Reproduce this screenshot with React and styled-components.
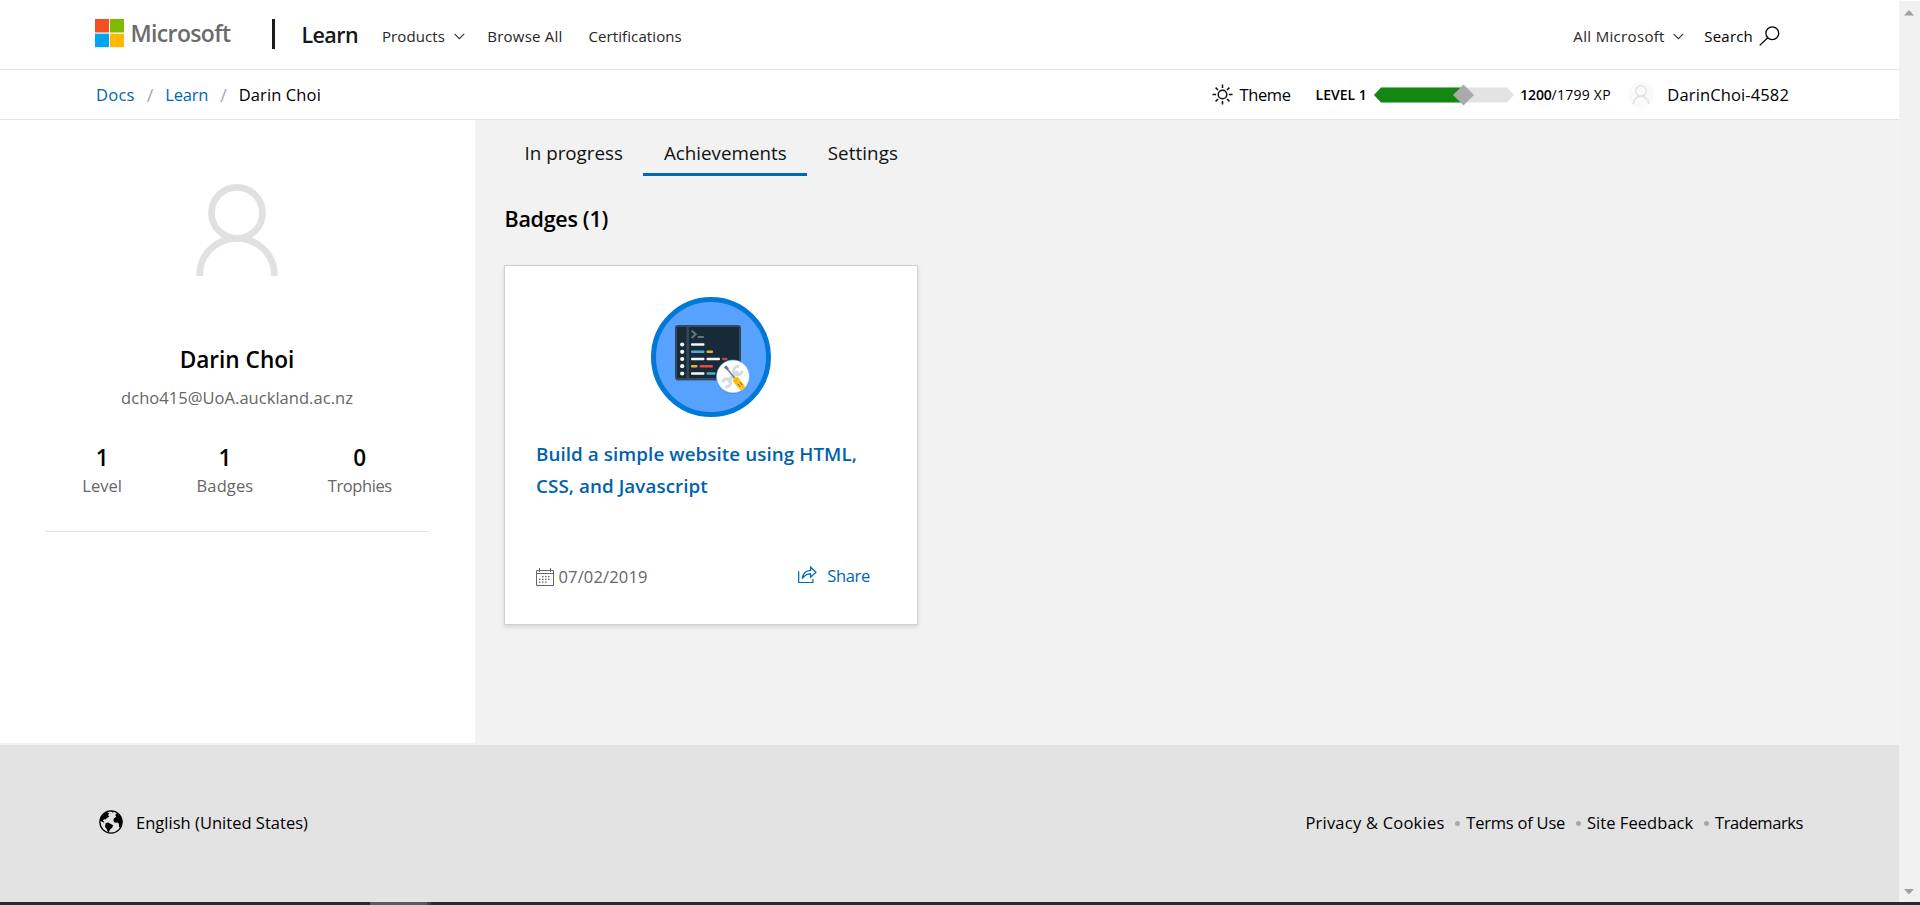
import React from 'react';
import styled, { createGlobalStyle } from 'styled-components';

const GlobalStyle = createGlobalStyle`
  * { box-sizing: border-box; }
  body {
    margin: 0;
    background: #fff;
    color: #000;
    font-family: "Open Sans", "Noto Sans", sans-serif;
    font-size: 16.5px;
    overflow: hidden;
  }
  svg { display: block; flex: none; }
`;

const Screen = styled.div`
  width: 100%;
  height: 905px;
  display: flex;
  flex-direction: column;
`;

const Viewport = styled.div`
  height: 902px;
  display: flex;
`;

const Page = styled.div`
  flex: 1;
  min-width: 0;
  display: flex;
  flex-direction: column;
`;

const ScrollTrack = styled.div`
  width: 21px;
  margin-top: 1px;
  padding: 9px 0 7px 5px;
  background: #f1f1f1;
  display: flex;
  flex-direction: column;
  justify-content: space-between;
`;

const Taskbar = styled.div`
  height: 3px;
  background: #29292e;
  display: flex;
`;

const TaskbarItem = styled.div`
  width: 61px;
  margin-left: 370px;
  background: #5a5a5e;
  border-right: 4px solid #414146;
`;

/* Site header */

const Header = styled.header`
  height: 70px;
  flex: none;
  padding: 19px 119px 0 95px;
  border-bottom: 1px solid #e3e3e3;
  display: flex;
  align-items: flex-start;
`;

const Brand = styled.a`
  width: 177px;
  height: 29px;
  display: flex;
  align-items: flex-start;
  color: #6b6b6b;
  font-size: 23px;
  font-weight: 600;
  letter-spacing: -0.64px;
  line-height: 28px;
`;

const BrandName = styled.span`
  margin-left: 6.5px;
`;

const BrandDivider = styled.div`
  width: 2.5px;
  height: 30px;
  background: #1b1b1b;
`;

const SiteName = styled.a`
  margin-left: 27px;
  width: 80.5px;
  color: #171717;
  font-size: 21.5px;
  font-weight: 600;
  letter-spacing: -0.6px;
  line-height: 31px;
`;

const NavGroup = styled.nav`
  display: flex;
  align-items: center;
  height: 20px;
  margin-top: 7px;
  margin-left: ${(p) => (p.$end ? 'auto' : '0')};
`;

const NavLink = styled.a`
  display: flex;
  align-items: center;
  font-size: 15px;
  line-height: 20px;
  white-space: nowrap;
  color: ${(p) => (p.$dark ? '#000' : '#262626')};
  letter-spacing: ${(p) => p.$track || 0}px;
  margin-left: ${(p) => p.$gap || 0}px;
  svg { margin-left: ${(p) => p.$iconGap || 9}px; }
`;

/* Breadcrumb bar */

const SubHeader = styled.div`
  height: 50px;
  flex: none;
  padding: 0 110px 0 96px;
  border-bottom: 1px solid #e3e3e3;
  display: flex;
  align-items: center;
  justify-content: space-between;
  white-space: nowrap;
`;

const Crumbs = styled.div`
  display: flex;
  align-items: center;
  line-height: 24px;
`;

const Crumb = styled.a`
  color: ${(p) => (p.$current ? '#000' : '#0065b3')};
  letter-spacing: ${(p) => p.$track}px;
`;

const Slash = styled.span`
  margin: 0 11.5px 0 12px;
  width: 7px;
  font-size: 18px;
  color: #a8a8a8;
`;

const Account = styled.div`
  display: flex;
  align-items: center;
  line-height: 24px;
`;

const ThemeButton = styled.a`
  display: flex;
  align-items: center;
  gap: 6.5px;
  letter-spacing: -0.37px;
`;

const Level = styled.span`
  margin-left: 25px;
  font-size: 14px;
  font-weight: 600;
`;

const LevelBar = styled.div`
  margin: 0 6px 0 7.5px;
`;

const Points = styled.span`
  font-size: 14px;
  letter-spacing: 0.25px;
  b { font-weight: 600; letter-spacing: -0.2px; }
`;

const Avatar = styled.div`
  width: 26px;
  height: 26px;
  margin: 0 13px 0 17.5px;
  border-radius: 50%;
  background: #fafafa;
  display: flex;
  justify-content: center;
  align-items: center;
`;

const UserName = styled.span`
  letter-spacing: 0.13px;
`;

/* Body */

const Body = styled.div`
  height: 625px;
  flex: none;
  background: #f2f2f2;
  display: flex;
  align-items: flex-start;
`;

const Sidebar = styled.aside`
  width: 475px;
  height: 623px;
  padding: 64px 46px 0 45px;
  background: #fff;
  display: flex;
  flex-direction: column;
  align-items: center;
`;

const ProfileName = styled.h1`
  margin: 69px 0 0;
  font-size: 22.6px;
  font-weight: 600;
  line-height: 30px;
`;

const Email = styled.div`
  margin-top: 11px;
  line-height: 24px;
  letter-spacing: 0.04px;
  color: #666;
`;

const Stats = styled.div`
  align-self: stretch;
  margin-top: 34px;
  height: 88px;
  border-bottom: 1px solid #e3e3e3;
  display: flex;
  justify-content: space-around;
`;

const Stat = styled.div`
  display: flex;
  flex-direction: column;
  align-items: center;
  gap: 2px;
`;

const StatValue = styled.span`
  font-size: 22.5px;
  font-weight: 600;
  line-height: 28px;
`;

const StatLabel = styled.span`
  line-height: 24px;
  color: #666;
  letter-spacing: ${(p) => p.$track}px;
`;

const Main = styled.main`
  padding-left: 29px;
`;

const Tabs = styled.div`
  display: flex;
`;

const Tab = styled.a`
  height: 56px;
  padding: 21px 20.5px 0 20.5px;
  border-bottom: 3px solid ${(p) => (p.$active ? '#0067b8' : 'transparent')};
  font-size: 18.8px;
  line-height: 25px;
  letter-spacing: ${(p) => p.$track}px;
  color: #111;
`;

const SectionTitle = styled.h2`
  margin: 28px 0 31px 0.5px;
  font-size: 21.5px;
  font-weight: 600;
  line-height: 30px;
  letter-spacing: -0.29px;
`;

const Card = styled.article`
  width: 414px;
  height: 360px;
  padding: 31px 31px 0;
  background: #fff;
  border: 1px solid #d2d2d2;
  box-shadow: 0 2px 4px rgba(0, 0, 0, 0.12);
  display: flex;
  flex-direction: column;
  align-items: center;
`;

const CardTitle = styled.h3`
  align-self: stretch;
  margin: 21px 0 0;
  font-size: 18.8px;
  font-weight: 600;
  line-height: 32px;
  letter-spacing: 0.08px;
  color: #0062ad;
`;

const CardFooter = styled.div`
  align-self: stretch;
  margin-top: 62px;
  padding-right: 16px;
  display: flex;
  justify-content: space-between;
  line-height: 24px;
`;

const DateEarned = styled.span`
  display: flex;
  align-items: center;
  gap: 4.5px;
  margin-top: 1px;
  color: #666;
  letter-spacing: 0.15px;
`;

const ShareLink = styled.a`
  display: flex;
  gap: 10px;
  height: 24px;
  color: #0065b3;
  letter-spacing: -0.3px;
  svg { margin-top: 2px; }
`;

/* Footer */

const Footer = styled.footer`
  flex: 1;
  padding: 0 96px 1px 99px;
  background: #e3e3e3;
  display: flex;
  align-items: center;
  justify-content: space-between;
  line-height: 24px;
`;

const Locale = styled.a`
  display: flex;
  align-items: center;
  gap: 13px;
  letter-spacing: 0.02px;
  svg { margin-bottom: 3px; }
`;

const FooterLinks = styled.div`
  display: flex;
  align-items: center;
`;

const FooterLink = styled.a`
  letter-spacing: ${(p) => p.$track}px;
`;

const Dot = styled.span`
  width: 5px;
  height: 5px;
  margin: 0 6px 0 10.8px;
  border-radius: 50%;
  background: #a9a9a9;
`;

/* Drawings */

const WindowsLogo = () => (
  <svg width="29" height="29" viewBox="0 0 29 29">
    <path fill="#f25022" d="M0 0h14v13.5H0z" />
    <path fill="#7fba00" d="M15 0h14v13.5H15z" />
    <path fill="#00a4ef" d="M0 14.7h14V28.2H0z" />
    <path fill="#ffb900" d="M15 14.7h14V28.2H15z" />
  </svg>
);

const Chevron = () => (
  <svg width="11" height="7" viewBox="0 0 11 7" fill="none" stroke="#333" strokeWidth="1.1">
    <path d="M.6 .8 5.4 5.7 10.2 .8" />
  </svg>
);

const SearchIcon = () => (
  <svg width="21" height="20" viewBox="0 0 21 20" fill="none" stroke="#000" strokeWidth="1.3">
    <circle cx="13.3" cy="7.2" r="6.4" />
    <path d="M8.8 11.7.7 19.4" />
  </svg>
);

const SunIcon = () => (
  <svg width="21" height="21" viewBox="0 0 21 21" fill="none" stroke="#111" strokeWidth="1.5">
    <circle cx="10.5" cy="10.5" r="4.3" />
    <path d="M10.5 .5v3.6M10.5 16.9v3.6M.5 10.5h3.6M16.9 10.5h3.6M3.6 3.6l2.4 2.4M15 15l2.4 2.4M3.6 17.4 6 15M15 6l2.4-2.4" />
  </svg>
);

const Progress = () => (
  <svg width="140" height="22" viewBox="0 0 140 22">
    <path fill="#e3e3e3" d="M0 11 7 3.5h126l7 7.5-7 7.5H7z" />
    <path fill="#128712" d="M0 11 7 3.5h83v15H7z" />
    <path fill="#aaa" d="M79 11 89.5 .5 100 11 89.5 21.5z" />
  </svg>
);

const PersonIcon = ({ width, height }) => (
  <svg width={width} height={height} viewBox="0 0 82 92" fill="none" stroke="#e1e1e1" strokeWidth="6.7">
    <circle cx="41" cy="28.9" r="25.5" />
    <path d="M3.7 92v-1.5a37.3 36.2 0 0 1 74.6 0V92" />
  </svg>
);

const CalendarIcon = () => (
  <svg width="18" height="18" viewBox="0 0 18 18" fill="none" stroke="#666" strokeWidth="1">
    <path d="M.5 2.5h17v15H.5zM.5 5.5h17M3.5 0v4M14.5 0v4" />
    <path strokeWidth="1.2" strokeDasharray="1.5 1.5" d="M6 8.6h9M3 11.4h12M3 14.2h9" />
  </svg>
);

const ShareIcon = () => (
  <svg width="19" height="18" viewBox="0 0 19 18" fill="none" stroke="#0065b3" strokeWidth="1.2">
    <path d="M.7 5.2v11.3h14.2v-3.5" />
    <path d="M4.3 12.6c.6-4.8 3.6-8 8.3-8.2V1l5.4 5.2-5.4 5V7.9c-3.8 0-6.3 1.7-8.3 4.7z" />
  </svg>
);

const GlobeIcon = () => (
  <svg width="24" height="24" viewBox="0 0 24 24">
    <circle cx="12" cy="12" r="11.1" fill="none" stroke="#000" strokeWidth="1.3" />
    <path d="M1.2 10.5C1.8 6.3 4.2 3.2 7.6 1.8L10.2 3.6 9 5.2l1.3 1.4L8 7.9 6.2 9.7l-1-.6-1.4 1.3 1.7 1.8-1.3.2z" />
    <path d="M6.6 13.2l2.5-.7 2.3 1.2 2.7 1.5-.9 2.6-2.2 1.6-1 2.4-1 .9-1.3-3.8-1.7-2.2z" />
    <path d="M14.9 8.6l2.3-1.9-1-1.7 1.7-1.7C21 5 23 8 23.2 11.7c-.1 2.2-.6 4-1.7 5.8l-1.4-.6-.3-3.4-1.5-1-2.6.2-1.4-1.9z" />
    <path d="M11.5 1.2h3.2l-.8 1.5z" />
  </svg>
);

const codeRows = [
  [18.5, [[16, 13.5, '#f4f7f3']]],
  [25.8, [[16, 13.5, '#4ab0d4'], [31.5, 6.5, '#f0ad3e']]],
  [33, [[16, 13.5, '#f4f7f3'], [31.5, 13.5, '#f4f7f3'], [47, 5.5, '#c04a45']]],
  [40.2, [[16, 6.5, '#f0ad3e'], [24.5, 13.5, '#e8483c']]],
  [47.5, [[16, 13.5, '#f4f7f3'], [31.5, 9, '#4ab0d4']]],
];

const BadgeArt = () => (
  <svg width="120" height="120" viewBox="0 0 120 120">
    <circle cx="60" cy="60" r="57.5" fill="#58a2ff" stroke="#0078d7" strokeWidth="5" />
    <g transform="translate(24 28)">
      <rect x=".5" y="1.5" width="65.5" height="54.5" rx="2.5" fill="#3d6ea8" opacity=".7" />
      <rect x="1" y="1" width="64" height="53" rx="2" fill="#182a37" stroke="#34495a" strokeWidth="2" />
      <path d="M12.7 1v53" stroke="#34495a" strokeWidth="2.4" />
      <path d="M16.7 5.5l4 3.7-4 3.7M22.8 12h6" fill="none" stroke="#64757f" strokeWidth="2" />
      {codeRows.map(([y, runs]) => (
        <g key={y}>
          <circle cx="7.2" cy={y + 1} r="2.1" fill="#f4f7f3" />
          {runs.map(([x, w, fill]) => (
            <rect key={x} x={x} y={y - 0.2} width={w} height="2.4" rx="1" fill={fill} />
          ))}
        </g>
      ))}
    </g>
    <circle cx="82" cy="80.5" r="16.5" fill="#3a80dc" opacity=".6" />
    <circle cx="82" cy="79.5" r="16.5" fill="#fff" stroke="#58a2ff" strokeWidth=".6" />
    <g fill="none" stroke="#d7dadd">
      <path d="M76.5 84.5 87 74.5" strokeWidth="3.6" />
      <path d="M88.3 69.7a4.2 4.2 0 1 0 2.8 4.2" strokeWidth="3" />
      <path d="M71.7 85.4a4 4 0 1 1 2.8 4.2" strokeWidth="3" />
    </g>
    <path d="M75 70.5 84.5 82" stroke="#77879a" strokeWidth="1.8" />
    <path d="M74 69.2l3 3" stroke="#66788c" strokeWidth="3" />
    <path d="M85.3 83.4 90.5 89.7" stroke="#fcc419" strokeWidth="6.5" strokeLinecap="round" />
    <path d="M83.3 84.8l4.2-3.5" stroke="#f5b400" strokeWidth="2" />
    <path d="M86.8 86.8l2.5 3M89 85.3l2.3 2.8" stroke="#7a621c" strokeWidth="1" />
  </svg>
);

const Arrow = ({ down }) => (
  <svg width="10" height="6" viewBox="0 0 10 6">
    <path fill="#a0a0a0" d={down ? 'M0 0h10L5 5.5z' : 'M0 5.5h10L5 0z'} />
  </svg>
);

const stats = [
  { value: 1, label: 'Level', track: 0.06 },
  { value: 1, label: 'Badges', track: 0.13 },
  { value: 0, label: 'Trophies', track: -0.42 },
];

const footerLinks = [
  { label: 'Privacy & Cookies', track: 0.23 },
  { label: 'Terms of Use', track: -0.22 },
  { label: 'Site Feedback', track: 0.06 },
  { label: 'Trademarks', track: -0.42 },
];

export default function App() {
  return (
    <Screen>
      <GlobalStyle />
      <Viewport>
        <Page>
          <Header>
            <Brand>
              <WindowsLogo />
              <BrandName>Microsoft</BrandName>
            </Brand>
            <BrandDivider />
            <SiteName>Learn</SiteName>
            <NavGroup>
              <NavLink $track={0.1}>Products<Chevron /></NavLink>
              <NavLink $track={0.24} $gap={22.2}>Browse All</NavLink>
              <NavLink $track={0.1} $gap={25.8}>Certifications</NavLink>
            </NavGroup>
            <NavGroup $end>
              <NavLink $track={0.33} $iconGap={8}>All Microsoft<Chevron /></NavLink>
              <NavLink $track={0.2} $gap={20.5} $iconGap={6} $dark>Search<SearchIcon /></NavLink>
            </NavGroup>
          </Header>

          <SubHeader>
            <Crumbs>
              <Crumb $track={0.27}>Docs</Crumb>
              <Slash>/</Slash>
              <Crumb $track={-0.2}>Learn</Crumb>
              <Slash>/</Slash>
              <Crumb $track={0.12} $current>Darin Choi</Crumb>
            </Crumbs>
            <Account>
              <ThemeButton><SunIcon />Theme</ThemeButton>
              <Level>LEVEL 1</Level>
              <LevelBar><Progress /></LevelBar>
              <Points><b>1200</b>/1799 XP</Points>
              <Avatar><PersonIcon width={18} height={19} /></Avatar>
              <UserName>DarinChoi-4582</UserName>
            </Account>
          </SubHeader>

          <Body>
            <Sidebar>
              <PersonIcon width={82} height={92} />
              <ProfileName>Darin Choi</ProfileName>
              <Email>dcho415@UoA.auckland.ac.nz</Email>
              <Stats>
                {stats.map((s) => (
                  <Stat key={s.label}>
                    <StatValue>{s.value}</StatValue>
                    <StatLabel $track={s.track}>{s.label}</StatLabel>
                  </Stat>
                ))}
              </Stats>
            </Sidebar>
            <Main>
              <Tabs>
                <Tab $track={0}>In progress</Tab>
                <Tab $track={0} $active>Achievements</Tab>
                <Tab $track={0.1}>Settings</Tab>
              </Tabs>
              <SectionTitle>Badges (1)</SectionTitle>
              <Card>
                <BadgeArt />
                <CardTitle>Build a simple website using HTML, CSS, and Javascript</CardTitle>
                <CardFooter>
                  <DateEarned><CalendarIcon />07/02/2019</DateEarned>
                  <ShareLink><ShareIcon />Share</ShareLink>
                </CardFooter>
              </Card>
            </Main>
          </Body>

          <Footer>
            <Locale><GlobeIcon />English (United States)</Locale>
            <FooterLinks>
              {footerLinks.map((l, i) => (
                <React.Fragment key={l.label}>
                  {i > 0 && <Dot />}
                  <FooterLink $track={l.track}>{l.label}</FooterLink>
                </React.Fragment>
              ))}
            </FooterLinks>
          </Footer>
        </Page>
        <ScrollTrack>
          <Arrow />
          <Arrow down />
        </ScrollTrack>
      </Viewport>
      <Taskbar><TaskbarItem /></Taskbar>
    </Screen>
  );
}
